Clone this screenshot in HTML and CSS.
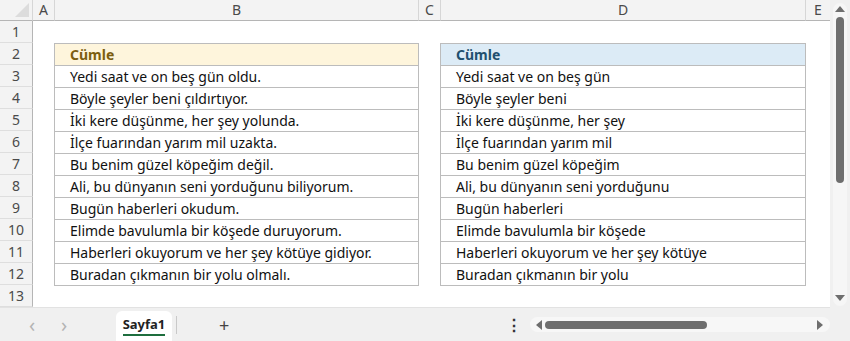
FILE: index.html
```html
<!DOCTYPE html>
<html>
<head>
  <title>Sayfa1</title>
  <meta name="viewport" content="width=device-width, initial-scale=1.0">
  <link rel="stylesheet" href="styles.css">
</head>
<body>
  <div class="sheet">
    <div class="main">
      <div class="grid">
        <div class="corner"><span class="tri"></span></div>
        <div class="colhead">A</div>
        <div class="colhead">B</div>
        <div class="colhead">C</div>
        <div class="colhead">D</div>
        <div class="colhead last">E</div>

        <div class="rowhead">1</div>
        <div class="rowhead">2</div>
        <div class="rowhead">3</div>
        <div class="rowhead">4</div>
        <div class="rowhead">5</div>
        <div class="rowhead">6</div>
        <div class="rowhead">7</div>
        <div class="rowhead">8</div>
        <div class="rowhead">9</div>
        <div class="rowhead">10</div>
        <div class="rowhead">11</div>
        <div class="rowhead">12</div>
        <div class="rowhead">13</div>

        <div class="tbl tbl-b">
          <div class="cell head">Cümle</div>
          <div class="cell">Yedi saat ve on beş gün oldu.</div>
          <div class="cell">Böyle şeyler beni çıldırtıyor.</div>
          <div class="cell">İki kere düşünme, her şey yolunda.</div>
          <div class="cell">İlçe fuarından yarım mil uzakta.</div>
          <div class="cell">Bu benim güzel köpeğim değil.</div>
          <div class="cell">Ali, bu dünyanın seni yorduğunu biliyorum.</div>
          <div class="cell">Bugün haberleri okudum.</div>
          <div class="cell">Elimde bavulumla bir köşede duruyorum.</div>
          <div class="cell">Haberleri okuyorum ve her şey kötüye gidiyor.</div>
          <div class="cell">Buradan çıkmanın bir yolu olmalı.</div>
        </div>

        <div class="tbl tbl-d">
          <div class="cell head">Cümle</div>
          <div class="cell">Yedi saat ve on beş gün</div>
          <div class="cell">Böyle şeyler beni</div>
          <div class="cell">İki kere düşünme, her şey</div>
          <div class="cell">İlçe fuarından yarım mil</div>
          <div class="cell">Bu benim güzel köpeğim</div>
          <div class="cell">Ali, bu dünyanın seni yorduğunu</div>
          <div class="cell">Bugün haberleri</div>
          <div class="cell">Elimde bavulumla bir köşede</div>
          <div class="cell">Haberleri okuyorum ve her şey kötüye</div>
          <div class="cell">Buradan çıkmanın bir yolu</div>
        </div>
      </div>

      <div class="vscroll">
        <div class="vtrack">
          <span class="arrow up"></span>
          <div class="vthumb"></div>
          <span class="arrow down"></span>
        </div>
      </div>
    </div>

    <div class="tabbar">
      <span class="nav first">&#x2039;</span>
      <span class="nav">&#x203A;</span>
      <div class="tab"><span class="tabname">Sayfa1</span></div>
      <span class="sep"></span>
      <span class="plus">+</span>
      <span class="dots">&#x22EE;</span>
      <div class="htrack">
        <span class="arrow left"></span>
        <div class="hthumb"></div>
        <span class="arrow right"></span>
      </div>
    </div>
  </div>
</body>
</html>
```

FILE: styles.css
```css
html, body {
  margin: 0;
  padding: 0;
}

body {
  width: 850px;
  height: 341px;
  overflow: hidden;
  font-family: "Noto Sans", "Open Sans", sans-serif;
  background-color: #f0f0f0;
  color: #111;
}

.sheet {
  display: flex;
  flex-direction: column;
  height: 341px;
}

.main {
  display: flex;
  height: 308px;
}

.grid {
  width: 830px;
  background-color: #fff;
  display: grid;
  grid-template-columns: 33px 22px 364px 22px 365px 24px;
  grid-template-rows: 21px repeat(13, 22px);
  border-bottom: 1px solid #e2e2e2;
}

.corner,
.colhead {
  background-color: #f3f3f3;
  border-bottom: 1px solid #b5b5b5;
  box-sizing: border-box;
}

.corner {
  position: relative;
  border-right: 1px solid #d6d6d6;
}

.tri {
  position: absolute;
  right: 3px;
  bottom: 3px;
  width: 0;
  height: 0;
  border-left: 14px solid transparent;
  border-bottom: 14px solid #dcdcdc;
}

.colhead {
  border-right: 1px solid #d6d6d6;
  font-size: 14px;
  line-height: 20px;
  text-align: center;
  color: #4a4a4a;
}

.colhead.last {
  border-right: none;
}

.rowhead {
  grid-column: 1;
  background-color: #f3f3f3;
  border-right: 1px solid #b5b5b5;
  border-bottom: 1px solid #dedede;
  box-sizing: border-box;
  font-size: 14px;
  line-height: 21px;
  text-align: center;
  color: #4a4a4a;
}

.tbl {
  grid-row: 3 / 14;
  margin-left: -1px;
  border: 1px solid #bcbcbc;
  align-self: start;
}

.tbl-b {
  grid-column: 3;
}

.tbl-d {
  grid-column: 5;
}

.cell {
  height: 21px;
  line-height: 21px;
  padding-left: 15px;
  font-size: 14px;
  border-top: 1px solid #bcbcbc;
  white-space: nowrap;
}

.cell.head {
  border-top: none;
  font-weight: bold;
}

.tbl-b .head {
  background-color: #fef5dc;
  color: #7c5e10;
}

.tbl-d .head {
  background-color: #dcebf6;
  color: #21506f;
}

.vscroll {
  width: 20px;
  display: flex;
  justify-content: center;
  padding-top: 3px;
  box-sizing: border-box;
}

.vtrack {
  width: 14px;
  height: 303px;
  background-color: #f6f6f6;
  border-radius: 7px;
  display: flex;
  flex-direction: column;
  align-items: center;
}

.vthumb {
  margin-top: 5px;
  width: 8px;
  height: 166px;
  background-color: #6e6e6e;
  border-radius: 4px;
}

.arrow {
  width: 0;
  height: 0;
}

.arrow.up {
  margin-top: 3px;
  border-left: 5px solid transparent;
  border-right: 5px solid transparent;
  border-bottom: 6px solid #6e6e6e;
}

.arrow.down {
  margin-top: auto;
  margin-bottom: 5px;
  border-left: 5px solid transparent;
  border-right: 5px solid transparent;
  border-top: 6px solid #6e6e6e;
}

.tabbar {
  flex: 1;
  display: flex;
  align-items: center;
}

.nav {
  width: 32px;
  font-size: 20px;
  color: #b4b4b4;
  text-align: center;
  line-height: 30px;
}

.nav.first {
  margin-left: 16px;
}

.tab {
  align-self: flex-end;
  margin-left: 36px;
  width: 56px;
  height: 30px;
  background-color: #fff;
  border-radius: 6px 6px 0 0;
  display: flex;
  justify-content: center;
}

.tabname {
  font-size: 13px;
  font-weight: bold;
  line-height: 18px;
  margin-top: 4px;
  height: 19px;
  border-bottom: 2px solid #1e6e3e;
  color: #222;
}

.sep {
  width: 1px;
  height: 18px;
  background-color: #c9c9c9;
  margin-left: 4px;
}

.plus {
  margin-left: 42px;
  font-size: 18px;
  color: #444;
  line-height: 20px;
}

.dots {
  margin-left: 277px;
  font-size: 16px;
  font-weight: bold;
  color: #333;
}

.htrack {
  margin-left: 8px;
  width: 300px;
  height: 15px;
  background-color: #f7f7f7;
  border-radius: 8px;
  display: flex;
  align-items: center;
}

.arrow.left {
  margin-left: 6px;
  border-top: 5px solid transparent;
  border-bottom: 5px solid transparent;
  border-right: 6px solid #6e6e6e;
}

.hthumb {
  margin-left: 3px;
  width: 162px;
  height: 8px;
  background-color: #6e6e6e;
  border-radius: 4px;
}

.arrow.right {
  margin-left: auto;
  margin-right: 7px;
  border-top: 5px solid transparent;
  border-bottom: 5px solid transparent;
  border-left: 6px solid #6e6e6e;
}
```
